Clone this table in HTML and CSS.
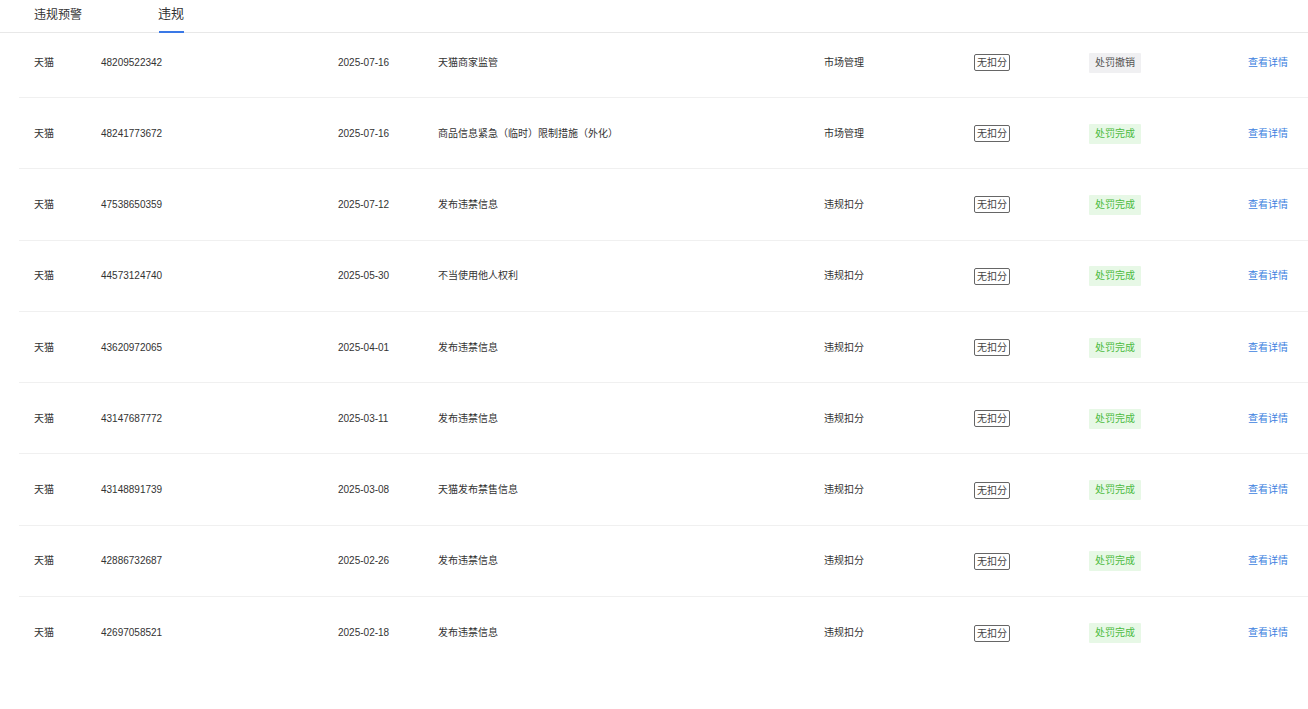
FILE: index.html
```html
<!DOCTYPE html>
<html lang="zh">
<head>
<meta charset="utf-8">
<title>违规</title>
<link rel="stylesheet" href="styles.css">
</head>
<body>
<div class="tabs">
  <div class="tab">违规预警</div>
  <div class="tab active">违规</div>
</div>
<div class="table">
  <div class="row"><span>天猫</span><span>48209522342</span><span>2025-07-16</span><span>天猫商家监管</span><span>市场管理</span><span><em class="box">无扣分</em></span><span><em class="tag gray">处罚撤销</em></span><span class="link">查看详情</span></div>
  <div class="row"><span>天猫</span><span>48241773672</span><span>2025-07-16</span><span>商品信息紧急（临时）限制措施（外化）</span><span>市场管理</span><span><em class="box">无扣分</em></span><span><em class="tag green">处罚完成</em></span><span class="link">查看详情</span></div>
  <div class="row"><span>天猫</span><span>47538650359</span><span>2025-07-12</span><span>发布违禁信息</span><span>违规扣分</span><span><em class="box">无扣分</em></span><span><em class="tag green">处罚完成</em></span><span class="link">查看详情</span></div>
  <div class="row"><span>天猫</span><span>44573124740</span><span>2025-05-30</span><span>不当使用他人权利</span><span>违规扣分</span><span><em class="box">无扣分</em></span><span><em class="tag green">处罚完成</em></span><span class="link">查看详情</span></div>
  <div class="row"><span>天猫</span><span>43620972065</span><span>2025-04-01</span><span>发布违禁信息</span><span>违规扣分</span><span><em class="box">无扣分</em></span><span><em class="tag green">处罚完成</em></span><span class="link">查看详情</span></div>
  <div class="row"><span>天猫</span><span>43147687772</span><span>2025-03-11</span><span>发布违禁信息</span><span>违规扣分</span><span><em class="box">无扣分</em></span><span><em class="tag green">处罚完成</em></span><span class="link">查看详情</span></div>
  <div class="row"><span>天猫</span><span>43148891739</span><span>2025-03-08</span><span>天猫发布禁售信息</span><span>违规扣分</span><span><em class="box">无扣分</em></span><span><em class="tag green">处罚完成</em></span><span class="link">查看详情</span></div>
  <div class="row"><span>天猫</span><span>42886732687</span><span>2025-02-26</span><span>发布违禁信息</span><span>违规扣分</span><span><em class="box">无扣分</em></span><span><em class="tag green">处罚完成</em></span><span class="link">查看详情</span></div>
  <div class="row"><span>天猫</span><span>42697058521</span><span>2025-02-18</span><span>发布违禁信息</span><span>违规扣分</span><span><em class="box">无扣分</em></span><span><em class="tag green">处罚完成</em></span><span class="link">查看详情</span></div>
</div>
</body>
</html>
```

FILE: styles.css
```css
html, body {
  margin: 0;
  padding: 0;
  background: #ffffff;
}
body {
  font-family: "Liberation Sans", "Noto Sans CJK SC", sans-serif;
  color: #333333;
  font-size: 10px;
}
.tabs {
  display: flex;
  align-items: stretch;
  height: 33px;
  box-sizing: border-box;
  border-bottom: 1px solid #e8e8e8;
  padding-left: 34px;
  gap: 76px;
}
.tab {
  font-size: 12px;
  line-height: 30px;
  color: #333333;
  position: relative;
}
.tab.active {
  font-size: 13px;
  line-height: 28px;
  color: #333333;
}
.tab.active::after {
  content: "";
  position: absolute;
  left: 1px;
  right: 0;
  bottom: -1px;
  height: 2px;
  background: #3a78e6;
}
.table {
  margin-left: 19px;
}
.row {
  display: grid;
  grid-template-columns: 67px 237px 100px 386px 150px 115px 159px 1fr;
  align-items: center;
  height: 71.3px;
  box-sizing: border-box;
  padding-left: 15px;
  padding-top: 1px;
  border-bottom: 1px solid #f0f0f0;
  line-height: 14px;
}
.row:first-child {
  height: 65px;
  padding-top: 0;
  padding-bottom: 5px;
}
.row:last-child {
  border-bottom: none;
}
.box {
  font-style: normal;
  display: inline-block;
  border: 1px solid #666666;
  border-radius: 2px;
  padding: 1px 2px;
  font-size: 10px;
  line-height: 13px;
  color: #444444;
}
.tag {
  font-style: normal;
  display: inline-block;
  padding: 3px 6px;
  font-size: 10px;
  line-height: 14px;
  border-radius: 1px;
}
.tag.gray {
  background: #f0f0f2;
  color: #555555;
}
.tag.green {
  background: #e7f8e6;
  color: #4cbb3f;
}
.link {
  color: #3d7fe0;
}
```
